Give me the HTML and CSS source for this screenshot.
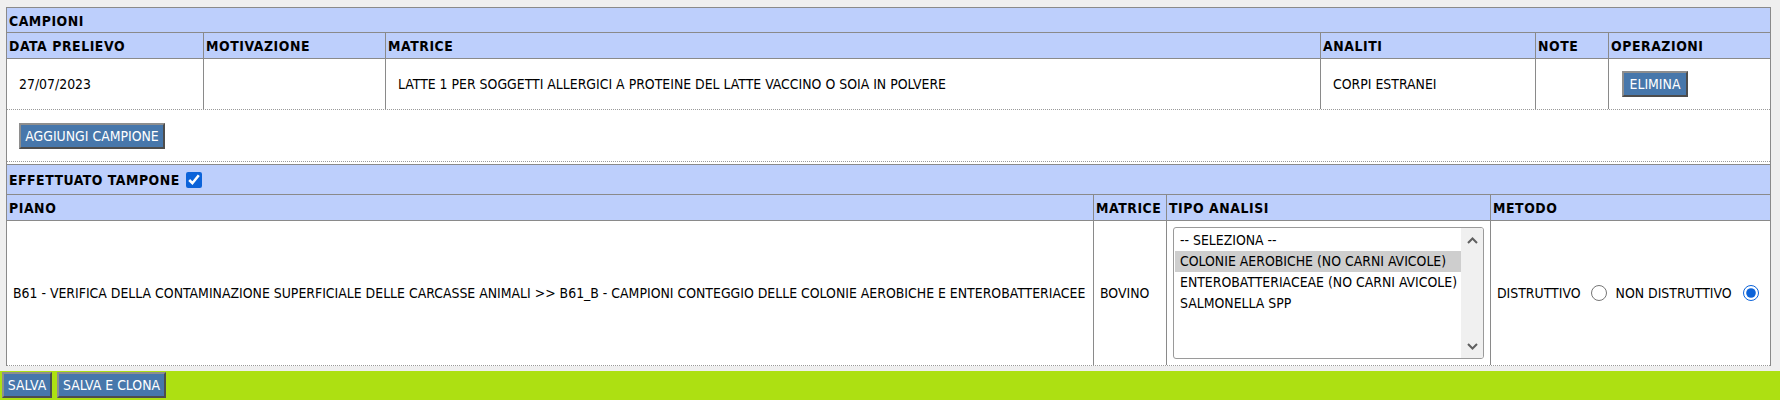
FILE: index.html
```html
<!DOCTYPE html>
<html lang="it">
<head>
<meta charset="utf-8">
<title>Campioni</title>
<link rel="stylesheet" href="styles.css">
</head>
<body>
<div class="box">
  <section class="sec">
    <div class="grid grid-campioni">
      <div class="cell title">CAMPIONI</div>
      <div class="cell head">DATA PRELIEVO</div>
      <div class="cell head">MOTIVAZIONE</div>
      <div class="cell head">MATRICE</div>
      <div class="cell head">ANALITI</div>
      <div class="cell head">NOTE</div>
      <div class="cell head last">OPERAZIONI</div>
      <div class="cell data-c">27/07/2023</div>
      <div class="cell data-c"></div>
      <div class="cell data-c">LATTE 1 PER SOGGETTI ALLERGICI A PROTEINE DEL LATTE VACCINO O SOIA IN POLVERE</div>
      <div class="cell data-c">CORPI ESTRANEI</div>
      <div class="cell data-c"></div>
      <div class="cell data-c last"><button class="btn btn-elimina" type="button">ELIMINA</button></div>
    </div>
  </section>
  <section class="sec sec-add">
    <button class="btn btn-aggiungi" type="button">AGGIUNGI CAMPIONE</button>
  </section>
  <section class="sec sec-tampone">
    <div class="grid grid-tampone">
      <div class="cell title title-tampone">EFFETTUATO TAMPONE <input class="check" type="checkbox" checked></div>
      <div class="cell head">PIANO</div>
      <div class="cell head">MATRICE</div>
      <div class="cell head">TIPO ANALISI</div>
      <div class="cell head last">METODO</div>
      <div class="cell data-t piano">B61 - VERIFICA DELLA CONTAMINAZIONE SUPERFICIALE DELLE CARCASSE ANIMALI &gt;&gt; B61_B - CAMPIONI CONTEGGIO DELLE COLONIE AEROBICHE E ENTEROBATTERIACEE</div>
      <div class="cell data-t">BOVINO</div>
      <div class="cell data-t">
        <div class="listbox">
          <div class="listbox-options">
            <div class="option">-- SELEZIONA --</div>
            <div class="option selected">COLONIE AEROBICHE (NO CARNI AVICOLE)</div>
            <div class="option">ENTEROBATTERIACEAE (NO CARNI AVICOLE)</div>
            <div class="option">SALMONELLA SPP</div>
          </div>
          <div class="scrollbar">
            <svg class="chev" viewBox="0 0 11 7" width="11" height="7"><path d="M1 6 L5.5 1.5 L10 6" fill="none" stroke="#606060" stroke-width="2"/></svg>
            <svg class="chev" viewBox="0 0 11 7" width="11" height="7"><path d="M1 1 L5.5 5.5 L10 1" fill="none" stroke="#606060" stroke-width="2"/></svg>
          </div>
        </div>
      </div>
      <div class="cell data-t last metodo">
        <span>DISTRUTTIVO</span><input class="radio radio-1" type="radio" name="metodo"><span>NON DISTRUTTIVO</span><input class="radio radio-2" type="radio" name="metodo" checked>
      </div>
    </div>
  </section>
</div>
<footer class="actions">
  <button class="btn btn-salva" type="button">SALVA</button>
  <button class="btn btn-clona" type="button">SALVA E CLONA</button>
</footer>
</body>
</html>
```

FILE: styles.css
```css
html, body {
  margin: 0;
  padding: 0;
}

body {
  background: #efefef;
  font-family: "DejaVu Sans Condensed", "Liberation Sans", sans-serif;
  font-size: 13.9px;
  color: #000;
  height: 400px;
  overflow: hidden;
}

.box {
  margin: 7px 9px 5px 6px;
  background: #fff;
  border: 1px solid #8a8a8a;
  border-bottom: none;
}

.sec {
  border-bottom: 1px dotted #9a9a9a;
}

.grid {
  display: grid;
}

.grid-campioni {
  grid-template-columns: 197px 182px 935px 215px 73px 161px;
  grid-template-rows: 25px 26px 50px;
}

.grid-tampone {
  grid-template-columns: 1087px 73px 324px 279px;
  grid-template-rows: 30px 26px 144px;
  border-top: 1px solid #8a8a8a;
}

.sec-add {
  padding: 13px 0 12px 12px;
}

.sec-tampone {
  padding-top: 2px;
}

.cell {
  box-sizing: border-box;
  border-right: 1px solid #8a8a8a;
  display: flex;
  align-items: center;
  white-space: nowrap;
  min-width: 0;
}

.cell.last {
  border-right: none;
}

.title {
  grid-column: 1 / -1;
  border-right: none;
  background: #bdcffc;
  border-bottom: 1px solid #8a8a8a;
  font-weight: bold;
  letter-spacing: 0.5px;
  padding-left: 2px;
  padding-top: 2px;
}

.title-tampone {
  padding-top: 1px;
}

.head {
  background: #bdcffc;
  border-bottom: 1px solid #8a8a8a;
  font-weight: bold;
  letter-spacing: 0.55px;
  padding-left: 2px;
  padding-top: 1px;
}

.data-c {
  padding-left: 12px;
}

.data-t {
  padding-left: 6px;
}

.check {
  width: 16px;
  height: 16px;
  margin: 0 0 0 6px;
  accent-color: #0c63d9;
}

.btn {
  font-family: inherit;
  font-size: 13.9px;
  color: #fff;
  background: #4777ab;
  border: 2px solid;
  border-color: #8e8e8e #4d4d4d #4d4d4d #8e8e8e;
  height: 26px;
  padding: 0;
  margin: 0;
  text-align: center;
  cursor: pointer;
}

.btn-elimina {
  width: 66px;
  margin-left: 1px;
}

.btn-aggiungi {
  width: 146px;
}

.btn-salva {
  width: 50px;
}

.btn-clona {
  width: 109px;
  margin-left: 5px;
}

.listbox {
  box-sizing: border-box;
  width: 311px;
  height: 132px;
  border: 1px solid #9a9a9a;
  border-radius: 3px;
  display: flex;
  background: #fff;
  overflow: hidden;
}

.listbox-options {
  flex: 1;
  padding: 2px 0 0 1px;
}

.option {
  height: 21px;
  line-height: 21px;
  padding-left: 5px;
  white-space: nowrap;
}

.option.selected {
  background: #cecece;
}

.scrollbar {
  width: 22px;
  background: #f0f0f0;
  display: flex;
  flex-direction: column;
  justify-content: space-between;
  align-items: center;
  padding: 9px 0 8px;
  box-sizing: border-box;
}

.chev {
  display: block;
}

.metodo .radio {
  width: 16px;
  height: 16px;
  margin: 0;
  accent-color: #0c63d9;
}

.radio-1 {
  margin-left: 10px !important;
  margin-right: 9px !important;
}

.radio-2 {
  margin-left: 11px !important;
}

.actions {
  background: #ade012;
  height: 29px;
  box-sizing: border-box;
  padding: 1px 2px 0;
  display: flex;
  align-items: flex-start;
}
```
